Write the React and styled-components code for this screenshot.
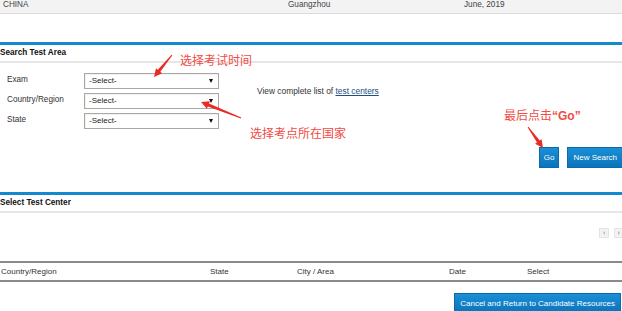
import React from 'react';
import styled, { createGlobalStyle } from 'styled-components';

const Global = createGlobalStyle`
  html, body { margin: 0; padding: 0; background: #fff; }
  body {
    font-family: "Liberation Sans", Arial, sans-serif;
    font-size: 8px;
    color: #333;
  }
`;

const Page = styled.div`
  position: relative;
  width: 622px;
  height: 311px;
  overflow: hidden;
`;

const ResultRow = styled.div`
  display: grid;
  grid-template-columns: 285px 176px 1fr;
  height: 13px;
  padding-left: 3px;
  background: #f3f3f3;
  border-bottom: 1px solid #dcdcdc;
  line-height: 10px;
  font-size: 8.2px;
  color: #444;
`;

const Section = styled.section`
  margin-top: ${(p) => p.$gap}px;
  border-top: 3px solid #1589d0;
`;

const SectionTitle = styled.div`
  height: 16px;
  line-height: 16px;
  font-weight: bold;
  font-size: 8.2px;
  color: #111;
  border-bottom: 2px solid #e6e6e6;
`;

const FormGrid = styled.div`
  display: grid;
  grid-template-columns: 77px 135px auto;
  grid-auto-rows: 16px;
  row-gap: 4px;
  padding: 10px 0 0 7px;
`;

const Label = styled.div`
  line-height: 13px;
  font-size: 8.2px;
  color: #333;
`;

const SelectBox = styled.div`
  position: relative;
  box-sizing: border-box;
  height: 16px;
  border: 1px solid #a8a8a8;
  background: #fff;
  box-shadow: inset 1px 1px 1px rgba(0, 0, 0, 0.06);
  padding-left: 4px;
  line-height: 14px;
  color: #222;
  &::after {
    content: '';
    position: absolute;
    right: 5px;
    top: 5px;
    border-left: 2.5px solid transparent;
    border-right: 2.5px solid transparent;
    border-top: 4px solid #111;
  }
`;

const ViewNote = styled.div`
  grid-column: 3;
  grid-row: 1 / span 2;
  align-self: center;
  padding-left: 38px;
  font-size: 8.4px;
  color: #333;
`;

const Link = styled.a`
  color: #1f4f82;
  text-decoration: underline;
`;

const ButtonRow = styled.div`
  display: flex;
  justify-content: flex-end;
  gap: 8px;
  margin-top: ${(p) => p.$top}px;
  margin-right: ${(p) => p.$right || 0}px;
`;

const BlueButton = styled.button`
  height: ${(p) => p.$h || 21}px;
  padding: 0 ${(p) => p.$px || 5}px;
  border: 1px solid #0b6aa8;
  background: linear-gradient(#1a8fd6, #0b74bb);
  color: #fff;
  font-family: "Liberation Sans", Arial, sans-serif;
  font-size: 8px;
  cursor: pointer;
`;

const PagerRow = styled.div`
  display: flex;
  justify-content: flex-end;
  gap: 5px;
  padding-top: 15px;
  margin-right: -2px;
`;

const PagerBtn = styled.div`
  width: 10px;
  height: 10px;
  box-sizing: border-box;
  border: 1px solid #e4e4e4;
  background: #f2f2f2;
  display: flex;
  align-items: center;
  justify-content: center;
  &::after {
    content: '';
    border-top: 2px solid transparent;
    border-bottom: 2px solid transparent;
    ${(p) => (p.$dir === 'left' ? 'border-right: 2px solid #bbb;' : 'border-left: 2px solid #bbb;')}
  }
`;

const TableHead = styled.div`
  display: grid;
  grid-template-columns: 209px 87px 152px 78px 1fr;
  margin-top: 23px;
  height: 17px;
  line-height: 17px;
  padding-left: 1px;
  border-top: 2px solid #8a8a8a;
  border-bottom: 2px solid #8a8a8a;
  color: #333;
`;

const Note = styled.div`
  position: absolute;
  left: ${(p) => p.$x}px;
  top: ${(p) => p.$y}px;
  font-family: "Noto Sans CJK SC", "Liberation Sans", sans-serif;
  font-size: 12px;
  line-height: 14px;
  color: #f24a44;
  white-space: nowrap;
`;

const Quoted = styled.span`
  font-family: "Liberation Sans", Arial, sans-serif;
  font-weight: bold;
  font-size: 12px;
`;

const Overlay = styled.svg`
  position: absolute;
  left: 0;
  top: 0;
  pointer-events: none;
`;

function arrowPoints(tx, ty, hx, hy) {
  const dx = hx - tx;
  const dy = hy - ty;
  const len = Math.hypot(dx, dy);
  const ux = dx / len;
  const uy = dy / len;
  const nx = -uy;
  const ny = ux;
  const headLen = 8;
  const bx = hx - ux * headLen;
  const by = hy - uy * headLen;
  const pts = [
    [tx + nx * 0.5, ty + ny * 0.5],
    [bx + nx * 1.6, by + ny * 1.6],
    [bx + nx * 4, by + ny * 4],
    [hx, hy],
    [bx - nx * 4, by - ny * 4],
    [bx - nx * 1.6, by - ny * 1.6],
    [tx - nx * 0.5, ty - ny * 0.5],
  ];
  return pts.map((p) => p.map((v) => v.toFixed(1)).join(',')).join(' ');
}

export default function App() {
  return (
    <Page>
      <Global />
      <ResultRow>
        <span>CHINA</span>
        <span>Guangzhou</span>
        <span>June, 2019</span>
      </ResultRow>

      <Section $gap={28}>
        <SectionTitle>Search Test Area</SectionTitle>
        <FormGrid>
          <Label>Exam</Label>
          <SelectBox>-Select-</SelectBox>
          <ViewNote>
            View complete list of <Link href="#">test centers</Link>
          </ViewNote>
          <Label>Country/Region</Label>
          <SelectBox>-Select-</SelectBox>
          <Label>State</Label>
          <SelectBox>-Select-</SelectBox>
        </FormGrid>
        <ButtonRow $top={18} $right={-1}>
          <BlueButton $px={4}>Go</BlueButton>
          <BlueButton $px={5}>New Search</BlueButton>
        </ButtonRow>
      </Section>

      <Section $gap={24}>
        <SectionTitle>Select Test Center</SectionTitle>
        <PagerRow>
          <PagerBtn $dir="left" />
          <PagerBtn $dir="right" />
        </PagerRow>
        <TableHead>
          <span>Country/Region</span>
          <span>State</span>
          <span>City / Area</span>
          <span>Date</span>
          <span>Select</span>
        </TableHead>
        <ButtonRow $top={11} $right={1}>
          <BlueButton $h={20} $px={5}>Cancel and Return to Candidate Resources</BlueButton>
        </ButtonRow>
      </Section>

      <Overlay width="622" height="311" viewBox="0 0 622 311">
        <polygon points={arrowPoints(172, 55, 154, 77)} fill="#ea2a24" />
        <polygon points={arrowPoints(241, 118, 201, 102)} fill="#ea2a24" />
        <polygon points={arrowPoints(528, 127, 543, 148)} fill="#ea2a24" />
      </Overlay>
      <Note $x={180} $y={53}>选择考试时间</Note>
      <Note $x={250} $y={126}>选择考点所在国家</Note>
      <Note $x={504} $y={108}>
        最后点击<Quoted>“Go”</Quoted>
      </Note>
    </Page>
  );
}
